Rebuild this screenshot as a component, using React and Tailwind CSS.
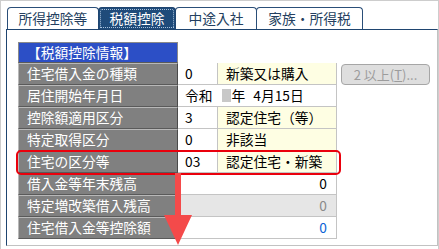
import React from "react";

const F = "font-['Noto_Sans_CJK_JP',sans-serif]";

function Tab({ w, children, active }) {
  if (active) {
    return (
      <div className={`relative h-[22px] ${w} rounded-t-[4px] border border-b-0 border-[#1f4570] bg-[#1f4b7a] flex items-center justify-center text-white -ml-[1px]`}>
        <div className="absolute left-[1px] right-[1px] top-[1px] bottom-[1px] border border-dotted border-[#a9c1dc] rounded-t-[2px]" />
        <span className="relative leading-none">{children}</span>
      </div>
    );
  }
  return (
    <div className={`h-[22px] ${w} rounded-t-[4px] border border-b-0 border-[#2a4e78] bg-white flex items-center justify-center text-[#243f60] -ml-[1px] first:ml-0`}>
      <span className="leading-none">{children}</span>
    </div>
  );
}

function Label({ children }) {
  return (
    <div className="w-[160px] h-[22px] shrink-0 bg-[#808080] border-t border-l border-t-[#b8b8b8] border-l-[#b8b8b8] border-b border-r border-b-[#5a5a5a] border-r-[#4a4a4a] flex items-center pl-[8px] text-white leading-none">
      {children}
    </div>
  );
}

function CodeRow({ label, code, text }) {
  return (
    <div className="flex h-[22px]">
      <Label>{label}</Label>
      <div className="w-[40px] h-[22px] bg-white border-b border-r border-[#c4c4c4] flex items-center pl-[7px] leading-none">{code}</div>
      <div className="w-[119px] h-[22px] bg-[#fefee3] border-b border-r border-[#c4c4c4] flex items-center pl-[8px] leading-none">{text}</div>
    </div>
  );
}

function NumRow({ label, value, bg, color }) {
  return (
    <div className="flex h-[22px]">
      <Label>{label}</Label>
      <div className={`w-[159px] h-[22px] ${bg} border-b border-r border-[#c4c4c4] flex items-center justify-end pr-[9px] leading-none ${color}`}>{value}</div>
    </div>
  );
}

export default function App() {
  return (
    <div className={`relative w-[439px] h-[249px] bg-white border-l border-t border-r border-[#cdcdcd] ${F} text-[13.75px] text-black overflow-hidden`}>
      <div className="flex flex-col pl-[5px] pt-[6px]">
        <div className="flex h-[22px] pl-[1px]">
          <Tab w="w-[92px]">所得控除等</Tab>
          <Tab w="w-[78px]" active>税額控除</Tab>
          <Tab w="w-[82px]">中途入社</Tab>
          <Tab w="w-[107px]">家族・所得税</Tab>
        </div>
        <div className="relative w-[432px] h-[217px] border-t border-l border-[#1f4570] border-r border-r-[#c2c2c2] border-b border-b-[#c2c2c2] pl-[11px] pt-[12px]">
          <div className="w-[160px] h-[21px] bg-[#2c4fc6] border border-[#8a8a8a] border-b-[#5a5a5a] flex items-center pl-[8px] text-white leading-none">
            【税額控除情報】
          </div>
          <div className="flex">
            <div className="flex flex-col">
              <CodeRow label="住宅借入金の種類" code="0" text="新築又は購入" />
              <div className="flex h-[22px]">
                <Label>居住開始年月日</Label>
                <div className="w-[159px] h-[22px] bg-white border-b border-r border-[#c4c4c4] flex items-center pl-[7px] leading-none">
                  <span>令和</span>
                  <span className="ml-[9px] w-[9px] h-[13px] bg-[#c8c8c8]" />
                  <span className="ml-[1px]">年</span>
                  <span className="ml-[8px]">4月15日</span>
                </div>
              </div>
              <CodeRow label="控除額適用区分" code="3" text="認定住宅（等）" />
              <CodeRow label="特定取得区分" code="0" text="非該当" />
              <div className="relative">
                <CodeRow label="住宅の区分等" code="03" text="認定住宅・新築" />
                <div className="absolute left-[-2px] top-[-1px] right-[-4px] bottom-[-2px] border-[2.5px] border-[#ea000c] rounded-[5px]" />
              </div>
              <NumRow label="借入金等年末残高" value="0" bg="bg-white" color="text-black" />
              <NumRow label="特定増改築借入残高" value="0" bg="bg-[#e6e6e6]" color="text-[#8a8a8a]" />
              <NumRow label="住宅借入金等控除額" value="0" bg="bg-white" color="text-[#0b63d6]" />
            </div>
            <div className="ml-[4px] pt-[1px]">
              <div className="w-[89px] h-[21px] rounded-[4px] border border-[#a6a6a6] bg-[#dedede] flex items-center justify-center text-[#9c9c9c] text-[13px] leading-none">
                2 以上(<span className="underline">T</span>)...
              </div>
            </div>
          </div>
        </div>
      </div>
      <svg className="absolute left-[160px] top-[172px]" width="36" height="76" viewBox="0 0 36 76">
        <rect x="14" y="0" width="6" height="44" fill="#f44a4a" />
        <polygon points="3,42 31,42 17,72" fill="#f44a4a" />
      </svg>
    </div>
  );
}
